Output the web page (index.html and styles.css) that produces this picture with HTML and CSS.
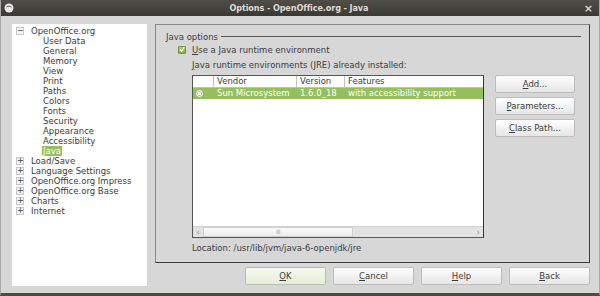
FILE: index.html
```html
<!DOCTYPE html>
<html>
<head>
<meta charset="utf-8">
<link rel="stylesheet" href="styles.css">
</head>
<body>
<div class="window">
  <div class="titlebar">
    <svg class="app-icon" width="10" height="10" viewBox="0 0 10 10"><circle cx="5" cy="5" r="4.5" fill="#e8e8e8"/><path d="M2.5 4 Q5 2 7.5 4" stroke="#666" stroke-width="1" fill="none"/></svg>
    <div class="title">Options - OpenOffice.org - Java</div>
    <div class="close">×</div>
  </div>
  <div class="content">
    <div class="tree">
      <div class="node"><span class="exp">−</span><span>OpenOffice.org</span></div>
      <div class="child">User Data</div>
      <div class="child">General</div>
      <div class="child">Memory</div>
      <div class="child">View</div>
      <div class="child">Print</div>
      <div class="child">Paths</div>
      <div class="child">Colors</div>
      <div class="child">Fonts</div>
      <div class="child">Security</div>
      <div class="child">Appearance</div>
      <div class="child">Accessibility</div>
      <div class="child"><span class="sel">Java</span></div>
      <div class="node"><span class="exp">+</span><span>Load/Save</span></div>
      <div class="node"><span class="exp">+</span><span>Language Settings</span></div>
      <div class="node"><span class="exp">+</span><span>OpenOffice.org Impress</span></div>
      <div class="node"><span class="exp">+</span><span>OpenOffice.org Base</span></div>
      <div class="node"><span class="exp">+</span><span>Charts</span></div>
      <div class="node"><span class="exp">+</span><span>Internet</span></div>
    </div>
    <div class="right">
      <div class="frame">
        <div class="legend"><span>Java options</span><span class="rule"></span></div>
        <div class="check-row">
          <span class="checkbox"><svg width="7" height="7" viewBox="0 0 7 7"><path d="M1 3.5 L3 5.5 L6 1.2" stroke="#fff" stroke-width="1.4" fill="none"/></svg></span>
          <span><u>U</u>se a Java runtime environment</span>
        </div>
        <div class="body">
          <div class="list-col">
            <div class="label"><u>J</u>ava runtime environments (JRE) already installed:</div>
            <div class="table">
              <div class="thead">
                <div class="c0"></div>
                <div class="c1">Vendor</div>
                <div class="c2">Version</div>
                <div class="c3">Features</div>
              </div>
              <div class="trow">
                <div class="c0"><span class="radio"></span></div>
                <div class="c1">Sun Microsystem</div>
                <div class="c2">1.6.0_18</div>
                <div class="c3">with accessibility support</div>
              </div>
              <div class="spacer"></div>
              <div class="hscroll">
                <span class="arrow">‹</span>
                <div class="track"><div class="thumb">III</div></div>
                <span class="arrow">›</span>
              </div>
            </div>
            <div class="location">Location: /usr/lib/jvm/java-6-openjdk/jre</div>
          </div>
          <div class="side-buttons">
            <div class="btn"><u>A</u>dd...</div>
            <div class="btn"><u>P</u>arameters...</div>
            <div class="btn"><u>C</u>lass Path...</div>
          </div>
        </div>
      </div>
      <div class="footer">
        <div class="btn wide default"><u>O</u>K</div>
        <div class="btn wide"><u>C</u>ancel</div>
        <div class="btn wide"><u>H</u>elp</div>
        <div class="btn wide"><u>B</u>ack</div>
      </div>
    </div>
  </div>
</div>
</body>
</html>
```
FILE: styles.css
```css
* { box-sizing: border-box; }
html, body { margin: 0; padding: 0; }
body {
  width: 600px;
  height: 296px;
  overflow: hidden;
  font-family: "DejaVu Sans", sans-serif;
  font-size: 8.5px;
  color: #3c3c3c;
  background: #3c3b37;
}
u { text-decoration: underline; text-underline-offset: 1px; }
.window {
  width: 600px;
  height: 296px;
  display: flex;
  flex-direction: column;
  background: #d7d7d7;
  border-bottom: 3px solid #4a4a48;
  border-left: 1px solid #a8a8a8;
  border-right: 1px solid #a8a8a8;
}
.titlebar {
  height: 16px;
  background: linear-gradient(#4f4e49, #3a3935);
  display: flex;
  align-items: center;
  padding: 0 4px 0 3px;
  position: relative;
  flex: none;
}
.app-icon { flex: none; }
.title {
  flex: 1;
  text-align: center;
  font-weight: bold;
  font-family: "DejaVu Sans Condensed", "DejaVu Sans", sans-serif;
  font-size: 9px;
  color: #dfdbd2;
  letter-spacing: -0.1px;
}
.close {
  color: #d8d8d8;
  font-size: 11px;
  font-weight: bold;
  line-height: 1;
  padding-right: 2px;
}
.content {
  flex: 1;
  display: flex;
  padding: 8px 9px 7px 11px;
  gap: 8px;
}
.tree {
  width: 135px;
  background: #fff;
  padding-top: 2px;
  display: flex;
  flex-direction: column;
}
.node, .child {
  height: 10px;
  line-height: 10px;
  white-space: nowrap;
}
.node { display: flex; align-items: center; padding-left: 4px; }
.exp {
  width: 8px;
  height: 8px;
  border: 1px solid #c8c8c8;
  background: #f4f4f4;
  font-size: 8px;
  line-height: 6px;
  text-align: center;
  color: #444;
  margin-right: 7px;
  flex: none;
}
.child { padding-left: 31px; }
.sel { background: #95bf5e; color: #fff; padding: 0 1px; margin-left: -1px; }
.right {
  flex: 1;
  display: flex;
  flex-direction: column;
  gap: 4px;
}
.frame {
  height: 239px;
  border: 1px solid #888;
  border-right-color: #3c3c3c;
  border-bottom-color: #3c3c3c;
  padding: 6px 8px 0 10px;
  display: flex;
  flex-direction: column;
}
.legend {
  display: flex;
  align-items: center;
  height: 11px;
  gap: 3px;
}
.rule { flex: 1; height: 1px; background: #555; }
.check-row {
  display: flex;
  align-items: center;
  height: 11px;
  margin-top: 2px;
  padding-left: 12px;
  gap: 6px;
}
.checkbox {
  width: 8px;
  height: 8px;
  border-radius: 1px;
  background: linear-gradient(#a8cf75, #7fae45);
  border: 1px solid #6d9a3a;
  display: flex;
  align-items: center;
  justify-content: center;
}
.body {
  display: flex;
  padding-left: 26px;
  margin-top: 5px;
  gap: 11px;
}
.list-col { width: 292px; display: flex; flex-direction: column; }
.label { height: 11px; line-height: 11px; margin-bottom: 4px; }
.table {
  height: 163px;
  border: 1px solid #555;
  border-right-color: #333;
  background: #fff;
  display: flex;
  flex-direction: column;
}
.thead, .trow { display: flex; height: 12px; line-height: 11px; }
.thead > div {
  border-right: 1px solid #c0c0c0;
  border-bottom: 1px solid #c0c0c0;
  padding-left: 3px;
  background: #fff;
}
.thead > .c3 { border-right: none; }
.trow { background: #95bf5e; color: #fff; height: 11px; line-height: 11px; }
.trow > div { padding-left: 3px; }
.c0 { width: 21px; flex: none; display: flex; align-items: center; }
.c1 { width: 83px; flex: none; }
.c2 { width: 48px; flex: none; }
.c3 { flex: 1; }
.radio {
  width: 7px;
  height: 7px;
  border-radius: 50%;
  border: 1px solid #fff;
  background: radial-gradient(circle, #fff 0 1.5px, #a9cf7a 2px);
}
.spacer { flex: 1; }
.hscroll {
  height: 11px;
  display: flex;
  align-items: center;
  background: #e2e2e2;
  border-top: 1px solid #cfcfcf;
  color: #888;
  font-size: 8px;
}
.arrow { width: 10px; text-align: center; flex: none; }
.track { flex: 1; height: 10px; display: flex; }
.thumb {
  width: 150px;
  height: 10px;
  background: linear-gradient(#fafafa, #ececec);
  border: 1px solid #d0d0d0;
  text-align: center;
  font-size: 6px;
  line-height: 8px;
  color: #aaa;
  letter-spacing: -0.5px;
}
.location { margin-top: 4px; height: 12px; line-height: 12px; }
.side-buttons {
  display: flex;
  flex-direction: column;
  gap: 4px;
  margin-top: 15px;
}
.btn {
  width: 80px;
  height: 18px;
  line-height: 16px;
  text-align: center;
  border: 1px solid #bdbdbd;
  border-radius: 2px;
  background: linear-gradient(#ffffff, #f0f0f0 60%, #e6e6e6);
  color: #3c3c3c;
}
.footer {
  display: flex;
  justify-content: flex-end;
  gap: 7px;
  padding-right: 0;
}
.btn.wide { width: 81px; }
.btn.default { background: linear-gradient(#f6f9f0, #e5eed8); border-color: #b7bfae; }
```
